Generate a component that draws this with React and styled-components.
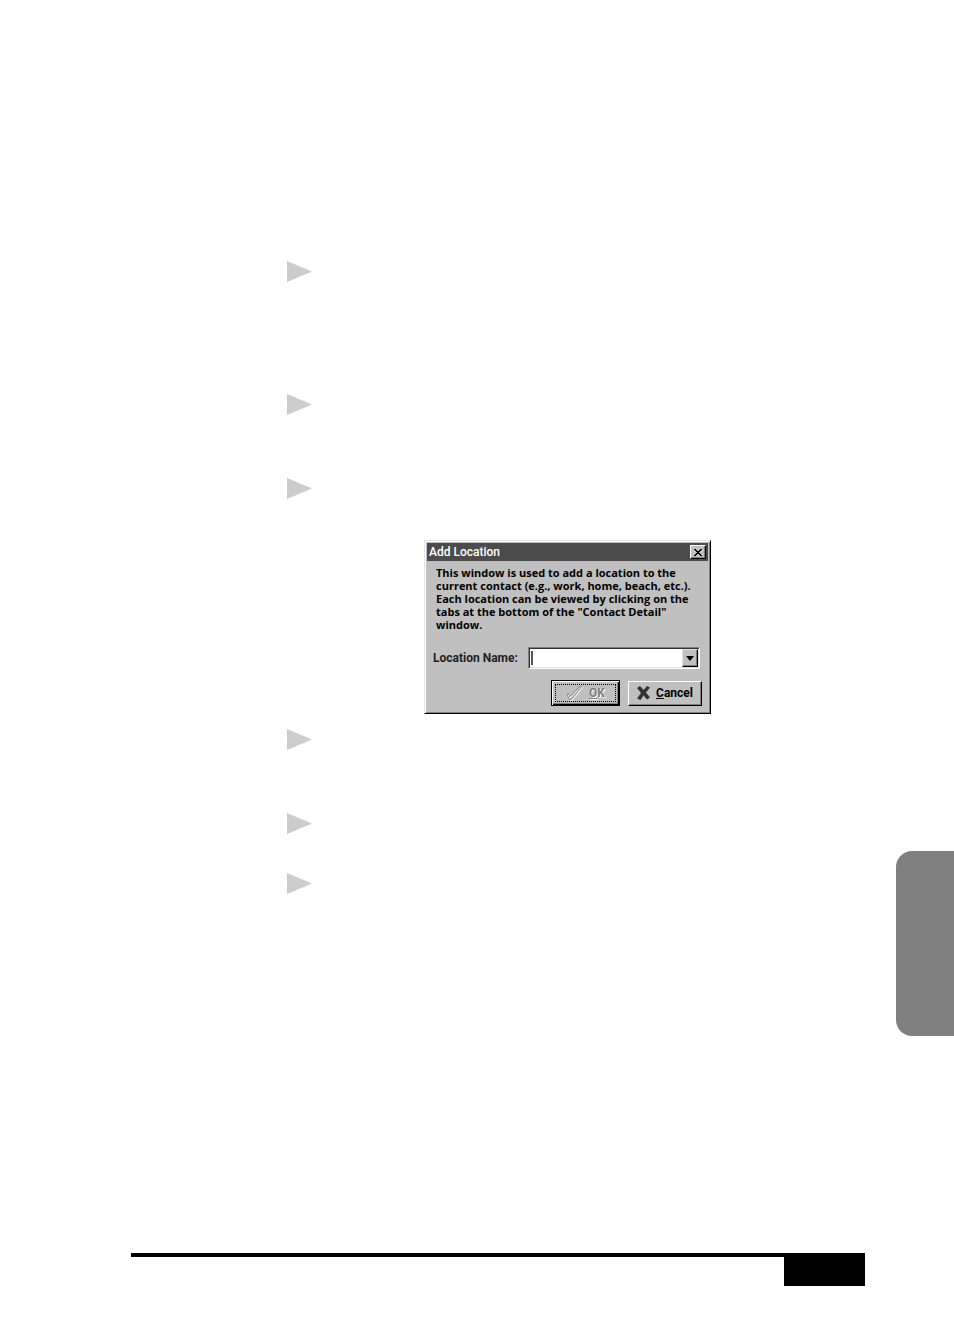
import { useState } from "react";
import styled, { createGlobalStyle } from "styled-components";

const steps = [
    { id: 1, height: 133 },
    { id: 2, height: 84 },
    { id: 3, height: 251, dialog: true },
    { id: 4, height: 84 },
    { id: 5, height: 60 },
    { id: 6, height: 21 },
];

const message = [
    'This window is used to add a location to the',
    'current contact (e.g., work, home, beach, etc.).',
    'Each location can be viewed by clicking on the',
    'tabs at the bottom of the "Contact Detail"',
    'window.',
];

const AddLocation = () => {
    const [name, setName] = useState('');

    return (
        <Dialog role="dialog" aria-labelledby="dialog-title">
            <TitleBar>
                <Title id="dialog-title">Add Location</Title>
                <CloseButton type="button" aria-label="Close">
                    <svg width="8" height="7" viewBox="0 0 8 7" shapeRendering="crispEdges">
                        <path d="M0 0h2v1h1v1h2V1h1V0h2v1H7v1H6v1H5v1h1v1h1v1h1v1H6V6H5V5H3v1H2v1H0V6h1V5h1V4h1V3H2V2H1V1H0z" />
                    </svg>
                </CloseButton>
            </TitleBar>
            <Message>
                {message.map((line) => <span key={line}>{line}</span>)}
            </Message>
            <Field>
                <label htmlFor="location-name">Location Name:</label>
                <Combo>
                    <Caret />
                    <input
                        id="location-name"
                        type="text"
                        role="combobox"
                        aria-expanded="false"
                        aria-controls="location-name"
                        value={name}
                        onChange={(e) => setName(e.target.value)}
                    />
                    <DropButton type="button" aria-label="Show locations">
                        <svg width="8" height="5" viewBox="0 0 8 5">
                            <path d="M0 0h8L4 5z" />
                        </svg>
                    </DropButton>
                </Combo>
            </Field>
            <Actions>
                <OkButton type="button" disabled>
                    <svg width="17" height="16" viewBox="0 0 17 16" fill="none">
                        <path d="M2 10.500l1.500-1 1.500 3L15.500 1.500l1 1L6 15.500H4.500z" stroke="#fff" />
                        <path d="M1 9.500l1.500-1 1.500 3L14.500.500l1 1L5 14.500H3.500z" stroke="#8c8c8c" />
                    </svg>
                    <span><u>O</u>K</span>
                </OkButton>
                <PushButton type="button">
                    <svg width="13" height="14" viewBox="0 0 13 14">
                        <path d="M0 2L3 0l3.500 4L10 0l3 1.500L9 6.500l4 5-3 2-3.500-4L3.500 14 0 12.500 4 7z" fill="#333" />
                    </svg>
                    <span><u>C</u>ancel</span>
                </PushButton>
            </Actions>
        </Dialog>
    )
};

const App = () => {
    return (
        <Page>
            <GlobalStyle />
            <Content>
                <Steps>
                    {steps.map((step) => (
                        <Step key={step.id} $height={step.height}>
                            <Marker width="25" height="21" viewBox="0 0 25 21" aria-hidden="true">
                                <path d="M0 0l25 10.500L0 21z" />
                            </Marker>
                            {step.dialog && <AddLocation />}
                        </Step>
                    ))}
                </Steps>
                <SideTab />
            </Content>
            <Footer>
                <PageNumber />
            </Footer>
        </Page>
    )
};

export default App;


const GlobalStyle = createGlobalStyle`
    * {
        box-sizing: border-box;
    }
    body {
        margin: 0;
        background: #fff;
    }
`;

const Page = styled.div`
    min-height: 100vh;
    display: flex;
    flex-direction: column;
    justify-content: space-between;
    font-family: Roboto, "Liberation Sans", Arial, sans-serif;
`;

const Content = styled.main`
    display: flex;
    justify-content: space-between;
    align-items: flex-start;
`;

const Steps = styled.ul`
    list-style: none;
    margin: 0;
    padding: 261px 0 0 287px;
`;

const Step = styled.li`
    min-height: ${(props) => props.$height}px;
`;

const Marker = styled.svg`
    display: block;
    fill: #ccc;
`;

const SideTab = styled.aside`
    width: 58px;
    height: 185px;
    margin-top: 851px;
    border-radius: 16px 0 0 16px;
    background: #808080;
`;

const Footer = styled.footer`
    display: flex;
    justify-content: flex-end;
    margin: 0 89px 57px 131px;
    border-top: 4px solid #000;
`;

const PageNumber = styled.div`
    width: 81px;
    height: 29px;
    background: #000;
`;

const Dialog = styled.section`
    width: 287px;
    margin: 41px 0 0 137px;
    padding: 2px 2px 7px;
    border: 1px solid;
    border-color: #e4e4e4 #000 #000 #e4e4e4;
    box-shadow: inset 1px 1px #fff, inset -1px -1px #808080;
    background: #c0c0c0;
    color: #000;
    font-size: 12px;
    font-weight: bold;
    line-height: 13px;

    button, input {
        font: inherit;
    }
    svg {
        display: block;
    }
`;

const TitleBar = styled.header`
    display: flex;
    align-items: center;
    justify-content: space-between;
    height: 18px;
    padding: 0 2px;
    background: #4c4c4c;
`;

const Title = styled.h2`
    margin: 0;
    color: #fff;
    font-size: 12px;
    font-weight: 500;
`;

const CloseButton = styled.button`
    display: flex;
    align-items: center;
    justify-content: center;
    width: 16px;
    height: 14px;
    padding: 0;
    border: 1px solid;
    border-color: #fff #000 #000 #fff;
    box-shadow: inset -1px -1px #808080;
    background: #c0c0c0;
`;

const Message = styled.p`
    margin: 5px 0 0;
    padding-left: 9px;
    font-family: "Open Sans", "Liberation Sans", sans-serif;
    font-size: 11px;

    span {
        display: block;
        white-space: nowrap;
    }
`;

const Field = styled.div`
    display: flex;
    align-items: center;
    justify-content: space-between;
    margin-top: 16px;
    padding: 0 8px 0 6px;

    label {
        color: #222;
    }
`;

const Combo = styled.div`
    display: flex;
    align-items: center;
    width: 172px;
    height: 22px;
    padding-left: 1px;
    border: 1px solid;
    border-color: #808080 #fff #fff #808080;
    box-shadow: inset 1px 1px #333, inset -1px -1px #dfdfdf;
    background: #fff;

    input {
        flex: 1;
        min-width: 0;
        padding: 0 2px;
        border: 0;
        outline: 0;
        background: transparent;
    }
`;

const Caret = styled.span`
    width: 2px;
    height: 14px;
    margin-left: 1px;
    background: #555;
`;

const DropButton = styled.button`
    display: flex;
    align-items: center;
    justify-content: center;
    width: 16px;
    height: 18px;
    margin-right: 1px;
    padding: 0;
    border: 1px solid;
    border-color: #dfdfdf #000 #000 #dfdfdf;
    box-shadow: inset -1px -1px #808080;
    background: #c0c0c0;
`;

const Actions = styled.div`
    display: flex;
    align-items: center;
    justify-content: flex-end;
    gap: 8px;
    margin-top: 11px;
    padding-right: 6px;
`;

const PushButton = styled.button`
    display: flex;
    align-items: center;
    justify-content: center;
    gap: 6px;
    width: 74px;
    height: 25px;
    padding: 0;
    border: 1px solid;
    border-color: #fff #000 #000 #fff;
    box-shadow: inset -1px -1px #808080;
    background: #c0c0c0;
    color: #000;
`;

const OkButton = styled(PushButton)`
    width: 69px;
    height: 26px;
    border-color: #000;
    box-shadow: inset 1px 1px #fff, inset -1px -1px #000, inset -2px -2px #808080;
    outline: 1px dotted #000;
    outline-offset: -5px;
    color: #808080;
    text-shadow: 1px 1px #fff;
`;
